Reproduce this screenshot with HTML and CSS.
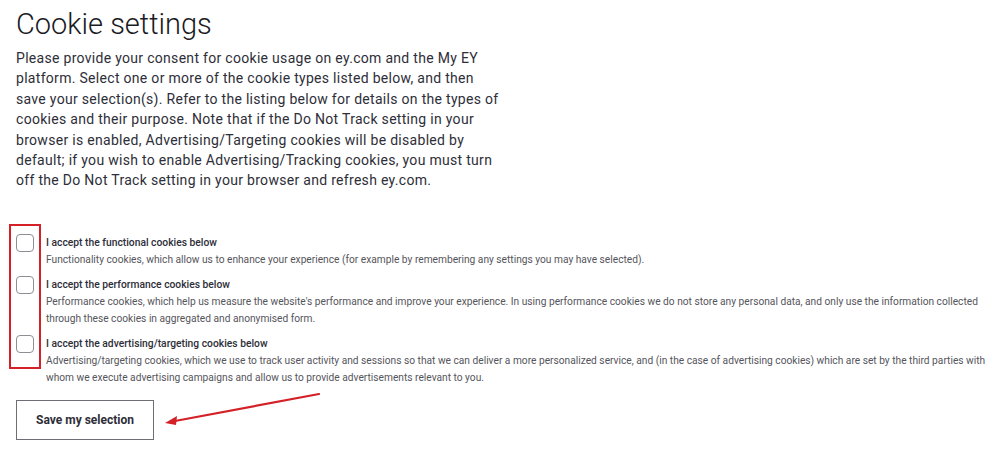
FILE: index.html
```html
<!DOCTYPE html>
<html lang="en">
<head>
    <meta charset="UTF-8">
    <meta name="viewport" content="width=device-width, initial-scale=1.0">
    <title>Cookie settings</title>
    <link rel="stylesheet" href="styles.css">
</head>
<body>

    <main class="cookie-page">
        <h1>Cookie settings</h1>
        <p class="intro">Please provide your consent for cookie usage on ey.com and the My EY platform. Select one or more of the cookie types listed below, and then save your selection(s). Refer to the listing below for details on the types of cookies and their purpose. Note that if the Do Not Track setting in your browser is enabled, Advertising/Targeting cookies will be disabled by default; if you wish to enable Advertising/Tracking cookies, you must turn off the Do Not Track setting in your browser and refresh ey.com.</p>

        <form class="cookie-form">
            <div class="cookie-list">
                <!-- red annotation around the checkboxes -->
                <div class="mark-box"></div>

                <label class="cookie-item">
                    <input type="checkbox" class="check">
                    <span class="cookie-text">
                        <span class="cookie-title">I accept the functional cookies below</span>
                        <span class="cookie-desc">Functionality cookies, which allow us to enhance your experience (for example by remembering any settings you may have selected).</span>
                    </span>
                </label>

                <label class="cookie-item">
                    <input type="checkbox" class="check">
                    <span class="cookie-text">
                        <span class="cookie-title">I accept the performance cookies below</span>
                        <span class="cookie-desc">Performance cookies, which help us measure the website's performance and improve your experience. In using performance cookies we do not store any personal data, and only use the information collected through these cookies in aggregated and anonymised form.</span>
                    </span>
                </label>

                <label class="cookie-item">
                    <input type="checkbox" class="check">
                    <span class="cookie-text">
                        <span class="cookie-title">I accept the advertising/targeting cookies below</span>
                        <span class="cookie-desc">Advertising/targeting cookies, which we use to track user activity and sessions so that we can deliver a more personalized service, and (in the case of advertising cookies) which are set by the third parties with whom we execute advertising campaigns and allow us to provide advertisements relevant to you.</span>
                    </span>
                </label>
            </div>

            <div class="actions">
                <button type="submit" class="save-btn">Save my selection</button>
                <!-- red annotation arrow -->
                <svg class="mark-arrow" width="165" height="40" viewBox="0 0 165 40">
                    <line x1="158" y1="2" x2="14" y2="29" stroke="#d42027" stroke-width="2.2" stroke-linecap="round"/>
                    <path d="M4 31 L16 24 L15 33 Z" fill="#d42027"/>
                </svg>
            </div>
        </form>
    </main>

</body>
</html>
```

FILE: styles.css
```css
/* Cookie settings page */
body {
    margin: 0;
    padding: 0;
    background-color: #fff;
    color: #2e2e38;
    font-family: Roboto, "Liberation Sans", sans-serif;
}
.cookie-page {
    padding: 6px 16px 0 16px;
}
h1 {
    font-size: 29px;
    font-weight: 300;
    margin: 0;
    line-height: 36px;
    color: #1a1a24;
}
.intro {
    width: 485px;
    margin: 6px 0 0 0;
    font-size: 14px;
    letter-spacing: 0.3px;
    line-height: 20.4px;
    color: #2e2e38;
}
.cookie-list {
    position: relative;
    margin-top: 43px;
    width: 975px;
}
.mark-box {
    position: absolute;
    left: -7px;
    top: -10px;
    width: 28px;
    height: 141px;
    border: 2px solid #d42027;
}
.cookie-item {
    display: flex;
    align-items: flex-start;
    margin-bottom: 8px;
}
.check {
    appearance: none;
    -webkit-appearance: none;
    width: 18px;
    height: 18px;
    margin: 0 12px 0 0;
    border: 1px solid #8e8e94;
    border-radius: 4px;
    background: #fff;
    flex-shrink: 0;
}
.cookie-text {
    display: flex;
    flex-direction: column;
}
.cookie-title {
    font-size: 10.3px;
    font-weight: 500;
    line-height: 18px;
    color: #2e2e38;
}
.cookie-desc {
    font-size: 10.2px;
    line-height: 16.5px;
    color: #55555c;
}
.actions {
    position: relative;
    margin-top: 14px;
}
.save-btn {
    width: 138px;
    height: 40px;
    background: #fff;
    border: 1px solid #6e6e74;
    font-family: Roboto, "Liberation Sans", sans-serif;
    font-size: 12px;
    font-weight: 700;
    color: #2e2e38;
    cursor: pointer;
}
.mark-arrow {
    position: absolute;
    left: 145px;
    top: -8px;
}
```
